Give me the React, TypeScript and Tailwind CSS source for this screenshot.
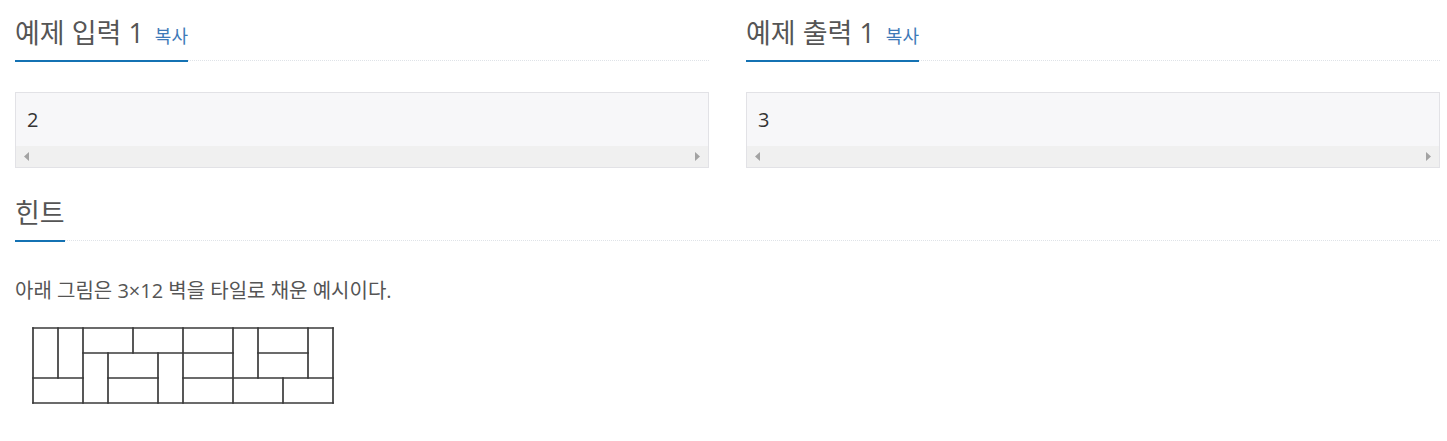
import React from "react";

const FONT = { fontFamily: '"Open Sans", "Noto Sans CJK KR", sans-serif' };

function Headline({ title, copy, className }: { title: string; copy?: boolean; className: string }) {
  return (
    <div className={"flex border-b border-dotted border-[#dfe3e8] " + className}>
      <h2 className="-mb-[2px] h-[52px] border-b-2 border-[#1472b3] text-[27px] leading-[46px] font-normal text-[#555] whitespace-nowrap">
        {title}
        {copy && (
          <span className="ml-[11px] text-[18px] text-[#3f7ab8] cursor-pointer">복사</span>
        )}
      </h2>
    </div>
  );
}

function Sample({ value }: { value: string }) {
  return (
    <div className="border border-[#e2e2e6] bg-[#f7f7f9]">
      <div className="h-[53px] pl-[11px] pt-[13px] text-[20px] leading-[28px] text-[#333]">{value}</div>
      <div className="h-[21px] bg-[#f0f0f0] flex items-center justify-between px-[8px]">
        <svg width="5" height="9" viewBox="0 0 5 9">
          <path d="M5 0 L0 4.5 L5 9 Z" fill="#a3a3a3" />
        </svg>
        <svg width="5" height="9" viewBox="0 0 5 9">
          <path d="M0 0 L5 4.5 L0 9 Z" fill="#a3a3a3" />
        </svg>
      </div>
    </div>
  );
}

function Tiles() {
  const c = 25;
  const o = 1;
  const lines: [number, number, number, number][] = [
    [0, 0, 12, 0],
    [0, 3, 12, 3],
    [0, 0, 0, 3],
    [12, 0, 12, 3],
    [1, 0, 1, 2],
    [2, 0, 2, 3],
    [3, 1, 3, 3],
    [4, 0, 4, 1],
    [5, 1, 5, 3],
    [6, 0, 6, 3],
    [8, 0, 8, 3],
    [9, 0, 9, 2],
    [10, 2, 10, 3],
    [11, 0, 11, 2],
    [0, 2, 2, 2],
    [2, 1, 8, 1],
    [3, 2, 5, 2],
    [6, 2, 12, 2],
    [9, 1, 11, 1],
  ];
  return (
    <svg width="302" height="77" viewBox="0 0 302 77" className="block">
      {lines.map(([x1, y1, x2, y2], i) => (
        <line
          key={i}
          x1={o + x1 * c}
          y1={o + y1 * c}
          x2={o + x2 * c}
          y2={o + y2 * c}
          stroke="#3a3a3a"
          strokeWidth={1.7}
          strokeLinecap="square"
        />
      ))}
    </svg>
  );
}

export default function App() {
  return (
    <div className="bg-white w-[1447px] h-[441px] pl-[15px] pr-[7px] pt-[10px]" style={FONT}>
      <div className="flex gap-[37px]">
        <section className="w-[694px]">
          <Headline title="예제 입력 1" copy className="mb-[31px]" />
          <Sample value="2" />
        </section>
        <section className="w-[694px]">
          <Headline title="예제 출력 1" copy className="mb-[31px]" />
          <Sample value="3" />
        </section>
      </div>
      <section>
        <Headline title="힌트" className="mt-[22px]" />
        <p className="mt-[35px] text-[20px] leading-[30px] text-[#555]">아래 그림은 3×12 벽을 타일로 채운 예시이다.</p>
        <div className="mt-[21px] ml-[17px]">
          <Tiles />
        </div>
      </section>
    </div>
  );
}
